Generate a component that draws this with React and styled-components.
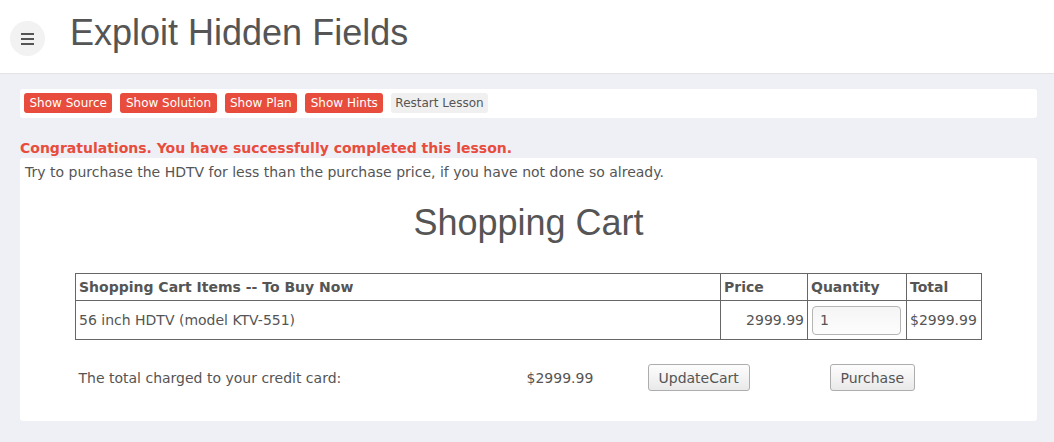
import React from "react";
import styled, { createGlobalStyle } from "styled-components";

const Global = createGlobalStyle`
  html, body { margin: 0; padding: 0; }
  body {
    background: #eff0f5;
    font-family: "DejaVu Sans", sans-serif;
    color: #555;
  }
`;

const Header = styled.header`
  display: flex;
  align-items: center;
  gap: 25px;
  height: 73px;
  padding-left: 10px;
  background: #fff;
  border-bottom: 1px solid #e3e3e6;
`;

const MenuButton = styled.button`
  width: 35px;
  height: 35px;
  border: none;
  border-radius: 50%;
  background: #f2f2f2;
  display: flex;
  flex-direction: column;
  align-items: center;
  justify-content: center;
  gap: 3px;
  padding: 0;
  margin-top: 4px;
`;

const Bar = styled.span`
  display: block;
  width: 13px;
  height: 2px;
  background: #555;
`;

const Title = styled.h1`
  margin: 0 0 8px;
  font-family: "Liberation Sans", Arial, sans-serif;
  font-weight: 400;
  font-size: 36px;
  line-height: 41px;
  color: #555;
`;

const Main = styled.main`
  padding: 15px 17px 20px 20px;
`;

const Toolbar = styled.div`
  display: flex;
  gap: 8px;
  padding: 4px 4px 5px;
  background: #fff;
  border-radius: 3px;
`;

const LessonButton = styled.button`
  height: 20px;
  padding: 0 ${(p) => (p.$muted ? 4 : 5.5)}px;
  border: none;
  border-radius: 3px;
  font-family: "DejaVu Sans", sans-serif;
  font-size: 12px;
  line-height: 20px;
  background: ${(p) => (p.$muted ? "#f0f0f0" : "#e74c3c")};
  color: ${(p) => (p.$muted ? "#555" : "#fff")};
`;

const Success = styled.div`
  margin: 21px 0 1px;
  font-size: 14px;
  font-weight: bold;
  line-height: 18px;
  color: #e74c3c;
`;

const Panel = styled.section`
  background: #fff;
  border-radius: 3px;
  padding: 5px 5px 30px;
`;

const Intro = styled.p`
  margin: 0;
  font-size: 14px;
  line-height: 18px;
`;

const CartTitle = styled.h2`
  margin: 21px 0 30px;
  text-align: center;
  font-family: "Liberation Sans", Arial, sans-serif;
  font-weight: 400;
  font-size: 36px;
  line-height: 41px;
  color: #555;
`;

const Table = styled.table`
  margin: 0 auto;
  border-collapse: collapse;
  table-layout: fixed;
  width: 906px;
  font-size: 14px;
`;

const Th = styled.th`
  border: 1px solid #666;
  padding: 3px;
  height: 20px;
  text-align: left;
  font-weight: bold;
`;

const Td = styled.td`
  border: 1px solid #666;
  padding: 3px;
  height: 32px;
  white-space: nowrap;
  text-align: ${(p) => (p.$right ? "right" : "left")};
`;

const QtyInput = styled.input`
  box-sizing: border-box;
  width: 89px;
  height: 29px;
  margin-left: 1px;
  padding: 0 7px;
  border: 1px solid #b5b5b5;
  border-radius: 4px;
  background: linear-gradient(#f5f5f5, #fdfdfd);
  font-family: "DejaVu Sans", sans-serif;
  font-size: 14px;
  color: #555;
  display: block;
`;

const TotalRow = styled.div`
  display: grid;
  grid-template-columns: 448px 121px 182px auto;
  align-items: center;
  width: 906px;
  margin: 24px auto 0;
  font-size: 14px;
`;

const TotalCell = styled.div`
  display: flex;
  align-items: center;
  padding: 0 3px;
`;

const FormButton = styled.button`
  height: 27px;
  padding: 0 10px;
  border: 1px solid #adadad;
  border-radius: 3px;
  background: linear-gradient(#fdfdfd, #e9e9e9);
  font-family: "DejaVu Sans", sans-serif;
  font-size: 14px;
  color: #555;
`;

export default function App() {
  return (
    <>
      <Global />
      <Header>
        <MenuButton aria-label="menu">
          <Bar />
          <Bar />
          <Bar />
        </MenuButton>
        <Title>Exploit Hidden Fields</Title>
      </Header>
      <Main>
        <Toolbar>
          <LessonButton>Show Source</LessonButton>
          <LessonButton>Show Solution</LessonButton>
          <LessonButton>Show Plan</LessonButton>
          <LessonButton>Show Hints</LessonButton>
          <LessonButton $muted>Restart Lesson</LessonButton>
        </Toolbar>
        <Success>Congratulations. You have successfully completed this lesson.</Success>
        <Panel>
          <Intro>
            Try to purchase the HDTV for less than the purchase price, if you have not done so already.
          </Intro>
          <CartTitle>Shopping Cart</CartTitle>
          <Table>
            <colgroup>
              <col style={{ width: 645 }} />
              <col style={{ width: 87 }} />
              <col style={{ width: 99 }} />
              <col style={{ width: 75 }} />
            </colgroup>
            <thead>
              <tr>
                <Th>Shopping Cart Items -- To Buy Now</Th>
                <Th>Price</Th>
                <Th>Quantity</Th>
                <Th>Total</Th>
              </tr>
            </thead>
            <tbody>
              <tr>
                <Td>56 inch HDTV (model KTV-551)</Td>
                <Td $right>2999.99</Td>
                <Td>
                  <QtyInput defaultValue="1" />
                </Td>
                <Td>$2999.99</Td>
              </tr>
            </tbody>
          </Table>
          <TotalRow>
            <TotalCell>The total charged to your credit card:</TotalCell>
            <TotalCell>$2999.99</TotalCell>
            <TotalCell>
              <FormButton>UpdateCart</FormButton>
            </TotalCell>
            <TotalCell>
              <FormButton>Purchase</FormButton>
            </TotalCell>
          </TotalRow>
        </Panel>
      </Main>
    </>
  );
}
